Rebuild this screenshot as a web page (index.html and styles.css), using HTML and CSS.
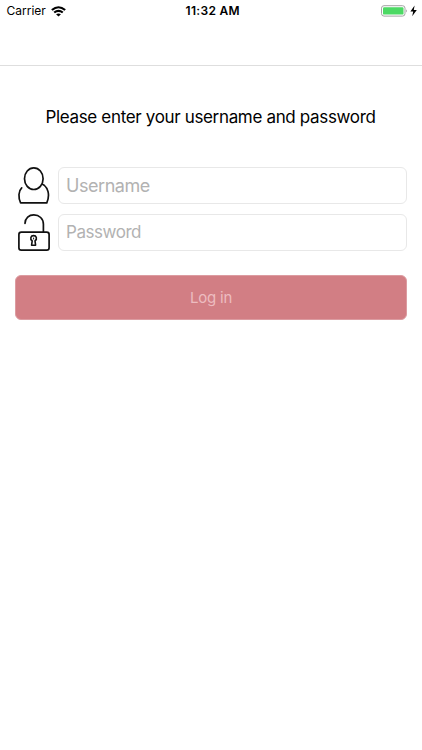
FILE: index.html
```html
<!DOCTYPE html>
<html lang="en">
<head>
<meta charset="utf-8">
<title>Log in</title>
<link rel="stylesheet" href="styles.css">
</head>
<body>
<header class="topbar">
  <div class="status">
    <div class="status-left">
      <span class="carrier">Carrier</span>
      <svg class="wifi" width="15" height="11" viewBox="0 0 14 11" preserveAspectRatio="none"><g fill="none" stroke="#000" stroke-width="2"><path d="M.8 4.1Q7-1.6 13.2 4.1"/><path d="M3 6.6Q7 3.1 11 6.6"/></g><path d="M4.7 8.3Q7 6.5 9.3 8.3L7 10.6Z"/></svg>
    </div>
    <span class="time">11:32 AM</span>
    <div class="status-right">
      <svg width="37" height="12" viewBox="0 0 37 12"><rect x=".5" y=".7" width="23.5" height="10.4" rx="2.5" fill="#fff" stroke="#a3a3a3"/><rect x="2" y="2.2" width="20.5" height="7.4" rx="1.2" fill="#4cd964"/><path d="M25.2 4.2Q26.8 5.9 25.2 7.6Z" fill="#8b8b8b"/><path d="M33.6 .4L29.4 6.6H32.2L31.2 11.2L35.8 4.9H32.8Z"/></svg>
    </div>
  </div>
</header>
<main class="login">
  <h1 class="prompt">Please enter your username and password</h1>
  <form class="form">
    <div class="row">
      <svg class="icon" width="34" height="40" viewBox="0 0 34 40"><g fill="none" stroke="#111" stroke-width="1.7" stroke-linejoin="round" stroke-linecap="round"><ellipse cx="16.8" cy="13.7" rx="9.3" ry="10.8"/><path d="M4.7 22.9C1.4 26 1.1 32.5 3.6 37.9H29.8C33.2 30 31.2 22 25.4 19.3"/></g></svg>
      <input class="field" type="text" placeholder="Username" aria-label="Username">
    </div>
    <div class="row">
      <svg class="icon" width="34" height="40" viewBox="0 0 34 40"><g fill="none" stroke="#111" stroke-width="1.7" stroke-linecap="round" stroke-linejoin="round"><path d="M8 11.4C8.2 6 12 2.9 16.8 2.9C22.3 2.9 26.4 6.7 26.4 12.3V20"/><rect x="1.9" y="20.2" width="30.2" height="18" rx="2.4"/><path d="M15.2 28.9C12.6 26.7 13.8 23.6 16.6 23.6S20.6 26.7 18 28.9L18.6 33.2H14.6Z" stroke-width="1.6"/><path d="M16.6 26V27" stroke-width="1"/></g></svg>
      <input class="field field-password" type="password" placeholder="Password" aria-label="Password">
    </div>
    <button class="submit" type="button">Log in</button>
  </form>
</main>
</body>
</html>
```
FILE: styles.css
```css
* { box-sizing: border-box; }
body {
  margin: 0;
  min-height: 750px;
  background: #fff;
  color: #111;
  font-family: Inter, Roboto, sans-serif;
}
.topbar { height: 66px; border-bottom: 1px solid #dedede; }
.status {
  display: grid;
  grid-template-columns: 1fr auto 1fr;
  align-items: center;
  height: 22px;
  padding: 0 4px 0 6.5px;
  font-size: 12px;
  line-height: 22px;
  color: #000;
}
.status svg { display: block; }
.status-left { display: flex; align-items: center; gap: 5px; }
.carrier { font-size: 12px; }
.time { padding-left: 1px; font-size: 12px; font-weight: 600; letter-spacing: .3px; }
.status-right { display: flex; justify-content: flex-end; }
.login { padding: 39px 15px 0; }
.prompt {
  margin: 0 1px 0 0;
  color: #000;
  font-size: 17px;
  font-weight: 400;
  line-height: 24px;
  letter-spacing: -.34px;
  text-align: center;
  white-space: nowrap;
}
.form { margin-top: 36px; }
.row { display: flex; align-items: center; height: 40px; margin-bottom: 7px; }
.icon { flex: none; margin: 0 7px 0 2px; }
.field {
  flex: 1;
  min-width: 0;
  height: 37px;
  padding: 0 7px;
  border: 1px solid #e8e8e8;
  border-radius: 6px;
  background: #fff;
  font: 18px Inter, Roboto, sans-serif;
  letter-spacing: -.45px;
}
.field-password { font-size: 17px; }
.field::placeholder { color: #b2b2b2; opacity: 1; }
.submit {
  display: block;
  width: 392px;
  height: 45px;
  margin-top: 23px;
  padding: 0 0 1px;
  border: 1px solid #dc9ca1;
  border-radius: 6px;
  background: #d27e84;
  color: #edbcc0;
  font: 15px Inter, Roboto, sans-serif;
  letter-spacing: -.2px;
}
```
